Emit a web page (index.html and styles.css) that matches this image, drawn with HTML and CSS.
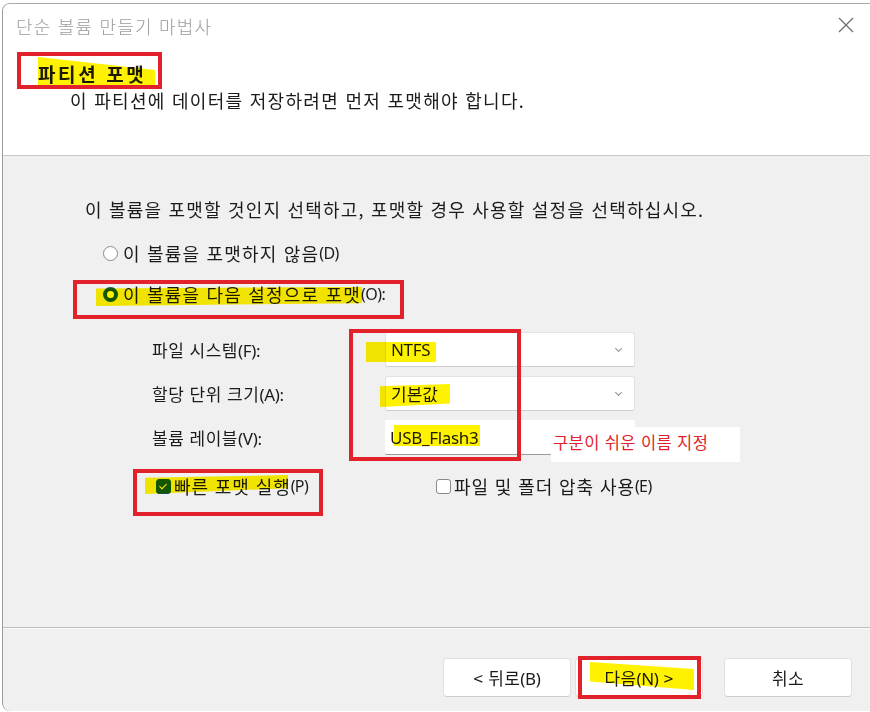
FILE: index.html
```html
<!DOCTYPE html>
<html lang="ko">
<head>
  <meta charset="UTF-8">
  <title>단순 볼륨 만들기 마법사</title>
  <link rel="stylesheet" href="styles.css">
</head>
<body>
  <div class="screen">
    <div class="dialog">
      <div class="titlebar">
        <span class="title">단순 볼륨 만들기 마법사</span>
        <svg class="close" width="16" height="16" viewBox="0 0 16 16">
          <path d="M1 1 L15 15 M15 1 L1 15" stroke="#6b6b6b" stroke-width="1.2" fill="none"/>
        </svg>
      </div>

      <div class="header">
        <h1>파티션 포맷</h1>
        <p>이 파티션에 데이터를 저장하려면 먼저 포맷해야 합니다.</p>
      </div>

      <div class="content">
        <p class="intro">이 볼륨을 포맷할 것인지 선택하고, 포맷할 경우 사용할 설정을 선택하십시오.</p>

        <div class="radios">
          <label class="radio"><span class="dot"></span>이 볼륨을 포맷하지 않음<span class="latin">(D)</span></label>
          <label class="radio"><span class="dot on"></span>이 볼륨을 다음 설정으로 포맷<span class="latin">(O):</span></label>
        </div>

        <div class="settings">
          <span class="label">파일 시스템<span class="latin">(F):</span></span>
          <div class="combo"><span class="latin">NTFS</span><span class="chev"></span></div>
          <span class="label">할당 단위 크기<span class="latin">(A):</span></span>
          <div class="combo">기본값<span class="chev"></span></div>
          <span class="label">볼륨 레이블<span class="latin">(V):</span></span>
          <div class="textbox latin">USB_Flash3</div>
        </div>

        <div class="checks">
          <label class="check first"><span class="box on"></span>빠른 포맷 실행<span class="latin">(P)</span></label>
          <label class="check"><span class="box"></span>파일 및 폴더 압축 사용<span class="latin">(E)</span></label>
        </div>
      </div>

      <div class="footer">
        <button class="btn">&lt; 뒤로<span class="latin">(B)</span></button>
        <button class="btn">다음<span class="latin">(N)</span> &gt;</button>
        <button class="btn cancel">취소</button>
      </div>
    </div>

    <!-- markup added on top of the screenshot -->
    <div class="hl hl-title"></div>
    <div class="hl hl-radio"></div>
    <div class="hl hl-ntfs"></div>
    <div class="hl hl-default"></div>
    <div class="hl hl-label"></div>
    <div class="hl hl-quick"></div>
    <div class="hl hl-next"></div>

    <div class="redbox rb-title"></div>
    <div class="redbox rb-radio"></div>
    <div class="redbox rb-fields"></div>
    <div class="redbox rb-quick"></div>
    <div class="redbox rb-next"></div>

    <div class="note">구분이 쉬운 이름 지정</div>
  </div>
</body>
</html>
```

FILE: styles.css
```css
:root {
  --panel: #f0f0f0;
  --text: #1b1b1b;
  --line: #c9c9c9;
  --accent: #135a52;
  --red: #e2222b;
  --marker: #fff200;
}

* {
  margin: 0;
  padding: 0;
  box-sizing: border-box;
}

body {
  background: #fff;
  font-family: "Noto Sans CJK KR", "Noto Sans", sans-serif;
  color: var(--text);
  overflow: hidden;
}

.latin {
  font-family: "Noto Sans", "Noto Sans CJK KR", sans-serif;
  letter-spacing: -0.3px;
}

.screen {
  position: relative;
  width: 870px;
  height: 712px;
  padding: 3px 0 0 2px;
}

.dialog {
  height: 708px;
  width: 880px;
  display: flex;
  flex-direction: column;
  background: var(--panel);
  border-left: 1px solid #9c9c9c;
  border-top: 1px solid #a9a9a9;
  border-radius: 8px 0 0 8px;
  overflow: hidden;
}

/* title bar */
.titlebar {
  height: 44px;
  background: #fff;
  display: flex;
  align-items: center;
  padding-left: 13px;
  position: relative;
}

.title {
  font-size: 18px;
  color: #9b9b9b;
  letter-spacing: 1.2px;
  font-weight: 300;
}

.close {
  position: absolute;
  left: 835px;
  top: 13px;
  width: 16px;
  height: 16px;
}

/* header */
.header {
  height: 108px;
  background: #fff;
  border-bottom: 1px solid var(--line);
  padding: 14px 0 0 35px;
}

.header h1 {
  font-size: 19px;
  font-weight: 700;
  line-height: 24px;
  letter-spacing: 2.6px;
}

.header p {
  font-size: 18px;
  line-height: 24px;
  margin: 2px 0 0 32px;
  letter-spacing: 1.3px;
}

/* body */
.content {
  flex: 1;
  padding: 41px 0 0 82px;
  font-size: 18px;
}

.intro {
  line-height: 24px;
  letter-spacing: 1.2px;
}

.radios {
  display: flex;
  flex-direction: column;
  gap: 17px;
  margin: 20px 0 0 18px;
}

.radio {
  display: flex;
  align-items: center;
  height: 24px;
  letter-spacing: 1.2px;
}

.radio .latin,
.check .latin {
  font-size: 16px;
  letter-spacing: -0.6px;
}

.dot {
  width: 15px;
  height: 15px;
  border-radius: 50%;
  border: 1px solid #8a8a8a;
  background: #fff;
  margin-right: 5px;
}

.dot.on {
  border: 4px solid var(--accent);
  background: #fff;
}

.settings {
  display: grid;
  grid-template-columns: 233px 250px;
  grid-auto-rows: 35px;
  row-gap: 9px;
  margin: 26px 0 0 67px;
  align-items: center;
}

.label {
  font-size: 17px;
  letter-spacing: 0.5px;
}

.combo,
.textbox {
  height: 35px;
  background: #fff;
  border: 1px solid #e2e2e2;
  border-bottom-color: #cfcfcf;
  border-radius: 3px;
  display: flex;
  align-items: center;
  padding-left: 5px;
  font-size: 17px;
  position: relative;
}

.textbox {
  border: none;
  border-bottom: 1px solid #9a9a9a;
  border-radius: 2px;
}

.chev {
  position: absolute;
  right: 13px;
  top: 13px;
  width: 5px;
  height: 5px;
  border-right: 1px solid #8f8f8f;
  border-bottom: 1px solid #8f8f8f;
  transform: rotate(45deg);
}

.checks {
  display: flex;
  align-items: center;
  height: 24px;
  margin: 19px 0 0 71px;
}

.check {
  display: flex;
  align-items: center;
  letter-spacing: 0.9px;
}

.check.first {
  width: 280px;
}

.box {
  width: 15px;
  height: 15px;
  border: 1px solid #8a8a8a;
  border-radius: 3px;
  background: #fff;
  margin-right: 3px;
  position: relative;
}

.box.on {
  background: var(--accent);
  border-color: var(--accent);
}

.box.on::after {
  content: "";
  position: absolute;
  left: 4px;
  top: 2px;
  width: 3px;
  height: 6px;
  border-right: 1.3px solid #fff;
  border-bottom: 1.3px solid #fff;
  transform: rotate(45deg);
}

/* footer */
.footer {
  height: 84px;
  border-top: 1px solid #bdbdbd;
  box-shadow: inset 0 1px 0 #fafafa;
  display: flex;
  align-items: flex-start;
  padding: 30px 0 0 440px;
  gap: 4px;
}

.btn {
  width: 128px;
  height: 39px;
  background: #fff;
  border: 1px solid #e0e0e0;
  border-bottom-color: #cdcdcd;
  border-radius: 4px;
  font-family: inherit;
  font-size: 17px;
  color: var(--text);
  letter-spacing: 0.3px;
}

.btn.cancel {
  margin-left: 17px;
}

/* annotations drawn over the screenshot */
.hl {
  position: absolute;
  background: var(--marker);
  mix-blend-mode: multiply;
}

.hl-title {
  left: 38px; top: 57px; width: 117px; height: 29px;
  clip-path: polygon(0 0, 100% 45%, 100% 100%, 0 100%);
}

.hl-radio {
  left: 96px; top: 287px; width: 266px; height: 19px;
  clip-path: polygon(0 8%, 100% 0, 100% 85%, 0 100%);
}

.hl-ntfs { left: 366px; top: 342px; width: 70px; height: 20px; }

.hl-default {
  left: 380px; top: 384px; width: 70px; height: 23px;
  clip-path: polygon(0 10%, 100% 0, 100% 85%, 0 100%);
}

.hl-label { left: 394px; top: 425px; width: 86px; height: 21px; }

.hl-quick {
  left: 145px; top: 475px; width: 143px; height: 19px;
  clip-path: polygon(0 15%, 100% 0, 100% 70%, 0 100%);
}

.hl-next {
  left: 590px; top: 662px; width: 104px; height: 28px;
  clip-path: polygon(0 0, 100% 25%, 100% 100%, 0 70%);
}

.redbox {
  position: absolute;
  border: 4px solid var(--red);
}

.rb-title { left: 17px; top: 52px; width: 145px; height: 37px; }
.rb-radio { left: 73px; top: 280px; width: 331px; height: 39px; }
.rb-fields { left: 349px; top: 329px; width: 172px; height: 132px; }
.rb-quick { left: 133px; top: 469px; width: 190px; height: 47px; }
.rb-next { left: 578px; top: 656px; width: 123px; height: 43px; }

.note {
  position: absolute;
  left: 551px;
  top: 427px;
  width: 189px;
  height: 35px;
  background: #fff;
  color: var(--red);
  font-size: 16.5px;
  line-height: 30px;
  padding-left: 2px;
  letter-spacing: 0.4px;
}
```
